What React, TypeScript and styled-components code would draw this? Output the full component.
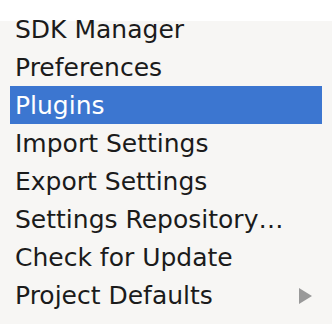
import styled, { createGlobalStyle } from "styled-components";

const items = [
  { label: "SDK Manager" },
  { label: "Preferences" },
  { label: "Plugins", active: true },
  { label: "Import Settings" },
  { label: "Export Settings" },
  { label: "Settings Repository…" },
  { label: "Check for Update" },
  { label: "Project Defaults", submenu: true },
];

const GlobalStyle = createGlobalStyle`
  html, body {
    margin: 0;
    padding: 0;
  }
  body {
    width: 332px;
    height: 324px;
    overflow: hidden;
    background: linear-gradient(#ffffff 0, #ffffff 21px, #f7f6f4 21px);
  }
`;

export default function App() {
  return (
    <>
      <GlobalStyle />
      <Menu>
        {items.map((item) => (
          <Row key={item.label} $active={item.active}>
            <Label>{item.label}</Label>
            {item.submenu && <Arrow />}
          </Row>
        ))}
      </Menu>
    </>
  );
}

const Menu = styled.div`
  display: flex;
  flex-direction: column;
  padding: 10px 10px 0;
`;

const Row = styled.div<{ $active?: boolean }>`
  display: flex;
  align-items: center;
  justify-content: space-between;
  height: 38px;
  padding: 1px 10px 0 5px;
  box-sizing: border-box;
  background: ${(p) => (p.$active ? "#3c76d0" : "transparent")};
  color: ${(p) => (p.$active ? "#ffffff" : "#1b1b1b")};
`;

const Label = styled.span`
  font-family: "DejaVu Sans", "Liberation Sans", sans-serif;
  font-size: 25px;
  line-height: 38px;
  white-space: nowrap;
`;

const Arrow = styled.span`
  width: 0;
  height: 0;
  border-top: 8px solid transparent;
  border-bottom: 8px solid transparent;
  border-left: 13px solid #999999;
`;
